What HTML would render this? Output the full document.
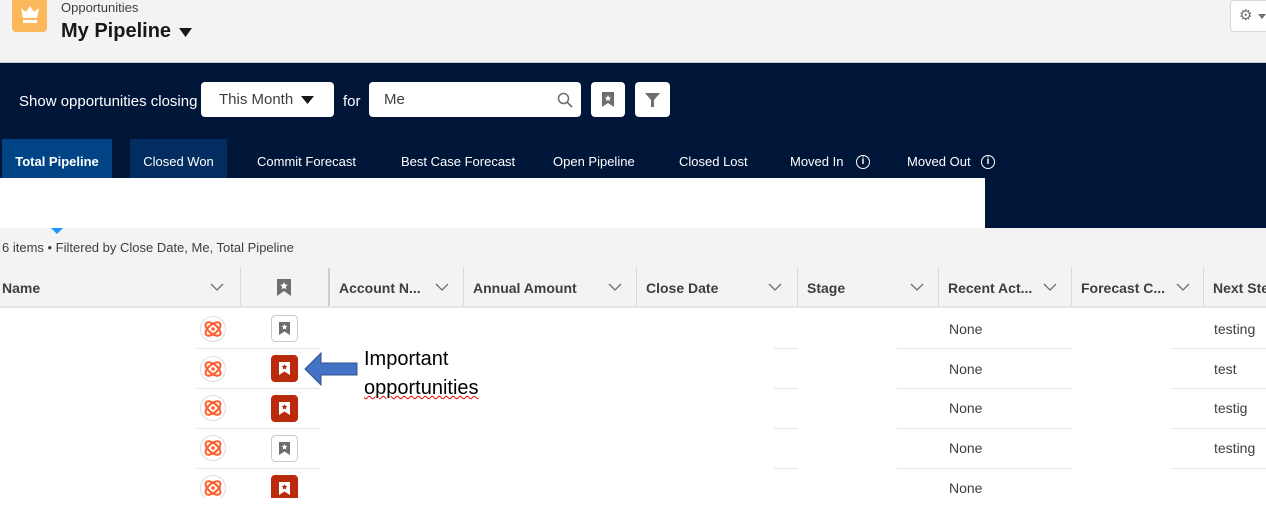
<!DOCTYPE html>
<html><head><meta charset="utf-8"><style>
*{margin:0;padding:0;box-sizing:border-box}
body{width:1266px;height:518px;overflow:hidden;position:relative;font-family:"Liberation Sans",sans-serif;background:#fff;color:#181818}
.a{position:absolute;white-space:nowrap}
.hdr{left:0;top:0;width:1266px;height:63px;background:#f3f3f3;border-bottom:1px solid #c9c9c9}
.navy{left:0;top:63px;width:1266px;height:165px;background:#001639}
.tab{top:139px;height:39px;color:#fff;font-size:13px;line-height:46px;text-align:center}
.gray{left:0;top:228px;width:1266px;height:40px;background:#f3f3f3}
.th{top:268px;height:40px;background:#f3f3f3;border-bottom:2px solid #e5e5e5;width:1266px;left:0;overflow:hidden}
.col{position:absolute;top:0;height:38px;border-left:1px solid #d8d8d8;font-weight:bold;font-size:14px;line-height:40px;padding-left:9px;color:#3e3e3c;white-space:nowrap;overflow:hidden}
.chev{position:absolute;top:15px}
.hl{height:1px;background:#e5e5e5}
.cell{font-size:14px;color:#3e3e3c}
.info{position:absolute;width:14px;height:14px;border:1.5px solid #fff;border-radius:50%;font-size:10px;line-height:11px;font-weight:bold;text-align:center;top:155px;color:#fff}
</style></head><body>
<div class="a hdr"></div>
<div class="a" style="left:12px;top:0;width:35px;height:32px;background:#fcb95b;border-radius:0 0 4px 4px"></div>
<svg class="a" style="left:18px;top:2px" width="24" height="24" viewBox="0 0 24 24"><path d="M3 6l5 4 4-6 4 6 5-4-2 10H5z" fill="#fff"/><rect x="5" y="18" width="14" height="3" fill="#fff"/></svg>
<div class="a" style="left:61px;top:0;font-size:13px;color:#3e3e3c">Opportunities</div>
<div class="a" style="left:61px;top:20px;font-size:20px;font-weight:bold">My Pipeline</div>
<svg class="a" style="left:179px;top:28px" width="13" height="9"><path d="M0 0h13L6.5 9z" fill="#181818"/></svg>
<div class="a" style="left:1230px;top:0;width:40px;height:32px;background:#fff;border:1px solid #d8d8d8;border-radius:4px"></div>
<div class="a" style="left:1239px;top:6px;font-size:15px;color:#706e6b">⚙</div>
<svg class="a" style="left:1258px;top:14px" width="8" height="5"><path d="M0 0h8L4 5z" fill="#706e6b"/></svg>
<div class="a navy"></div>
<div class="a" style="left:19px;top:93px;color:#fff;font-size:15px">Show opportunities closing</div>
<div class="a" style="left:201px;top:82px;width:133px;height:35px;background:#fff;border-radius:4px;font-size:15px;color:#3e3e3c;line-height:35px;padding-left:18px">This Month</div>
<svg class="a" style="left:301px;top:96px" width="13" height="8"><path d="M0 0h13L6.5 8z" fill="#181818"/></svg>
<div class="a" style="left:343px;top:93px;color:#fff;font-size:15px">for</div>
<div class="a" style="left:369px;top:82px;width:212px;height:35px;background:#fff;border-radius:4px;font-size:15px;color:#3e3e3c;line-height:35px;padding-left:15px">Me</div>
<svg class="a" style="left:557px;top:92px" width="16" height="16" viewBox="0 0 16 16"><circle cx="6.5" cy="6.5" r="5" fill="none" stroke="#706e6b" stroke-width="1.5"/><path d="M10 10l5 5" stroke="#706e6b" stroke-width="1.6"/></svg>
<div class="a" style="left:591px;top:82px;width:34px;height:35px;background:#fff;border-radius:4px"></div>
<svg class="a" style="left:602px;top:92px" width="12" height="15"><path d="M0 0h12v15l-6-4-6 4z" fill="#706e6b"/><path d="M6 3l1 2.2 2.2.2-1.7 1.5.5 2.2L6 8 4 9.1l.5-2.2L2.8 5.4 5 5.2z" fill="#fff"/></svg>
<div class="a" style="left:635px;top:82px;width:35px;height:35px;background:#fff;border-radius:4px"></div>
<svg class="a" style="left:645px;top:93px" width="15" height="14"><path d="M0 0h15L9 7v7H6V7z" fill="#706e6b"/></svg>
<div class="a tab" style="left:2px;width:110px;background:#014486;font-weight:bold">Total Pipeline</div>
<div class="a tab" style="left:130px;width:97px;background:#032d60">Closed Won</div>
<div class="a tab" style="left:257px">Commit Forecast</div>
<div class="a tab" style="left:401px">Best Case Forecast</div>
<div class="a tab" style="left:553px">Open Pipeline</div>
<div class="a tab" style="left:679px">Closed Lost</div>
<div class="a tab" style="left:790px">Moved In</div><div class="info" style="left:856px">i</div>
<div class="a tab" style="left:907px">Moved Out</div><div class="info" style="left:981px">i</div>
<div class="a" style="left:0;top:178px;width:985px;height:50px;background:#fff"></div>
<div class="a gray"></div>
<svg class="a" style="left:51px;top:228px" width="12" height="6"><path d="M0 0h12L6 6z" fill="#1b96ff"/></svg>
<div class="a" style="left:2px;top:240px;font-size:13px;color:#3e3e3c">6 items • Filtered by Close Date, Me, Total Pipeline</div>
<svg width="0" height="0" style="position:absolute"><defs>
<path id="cv" d="M1 1l6 6 6-6" fill="none" stroke="#706e6b" stroke-width="1.3"/>
</defs></svg>
<div class="a th">
<div class="col" style="left:-9px;width:250px;border:none;padding-left:11px">Name</div><svg class="chev" style="left:210px" width="14" height="9"><use href="#cv"/></svg>
<div class="col" style="left:240px;width:88px"></div>
<div class="col" style="left:328px;width:135px;border-left:2px solid #ccc">Account N...</div><svg class="chev" style="left:435px" width="14" height="9"><use href="#cv"/></svg>
<div class="col" style="left:463px;width:173px">Annual Amount</div><svg class="chev" style="left:608px" width="14" height="9"><use href="#cv"/></svg>
<div class="col" style="left:636px;width:161px">Close Date</div><svg class="chev" style="left:768px" width="14" height="9"><use href="#cv"/></svg>
<div class="col" style="left:797px;width:141px">Stage</div><svg class="chev" style="left:910px" width="14" height="9"><use href="#cv"/></svg>
<div class="col" style="left:938px;width:133px">Recent Act...</div><svg class="chev" style="left:1043px" width="14" height="9"><use href="#cv"/></svg>
<div class="col" style="left:1071px;width:132px">Forecast C...</div><svg class="chev" style="left:1176px" width="14" height="9"><use href="#cv"/></svg>
<div class="col" style="left:1203px;width:70px">Next Step</div>
</div>
<svg class="a" style="left:277px;top:279px" width="14" height="17"><path d="M0 0h14v17l-7-5-7 5z" fill="#706e6b"/><path d="M7 3l1.2 2.5 2.6.3-2 1.8.6 2.6L7 9 4.6 10.2l.6-2.6-2-1.8 2.6-.3z" fill="#fff"/></svg>

<div class="a hl" style="left:197px;top:348px;width:123px"></div>
<div class="a hl" style="left:197px;top:388px;width:123px"></div>
<div class="a hl" style="left:197px;top:428px;width:123px"></div>
<div class="a hl" style="left:197px;top:468px;width:123px"></div>
<div class="a hl" style="left:774px;top:348px;width:24px"></div><div class="a hl" style="left:897px;top:348px;width:175px"></div><div class="a hl" style="left:1171px;top:348px;width:95px"></div>
<div class="a hl" style="left:774px;top:388px;width:24px"></div><div class="a hl" style="left:897px;top:388px;width:175px"></div><div class="a hl" style="left:1171px;top:388px;width:95px"></div>
<div class="a hl" style="left:774px;top:428px;width:24px"></div><div class="a hl" style="left:897px;top:428px;width:175px"></div><div class="a hl" style="left:1171px;top:428px;width:95px"></div>
<div class="a hl" style="left:774px;top:468px;width:24px"></div><div class="a hl" style="left:897px;top:468px;width:175px"></div><div class="a hl" style="left:1171px;top:468px;width:95px"></div>

<div class="a cell" style="left:949px;top:321px">None</div><div class="a cell" style="left:1214px;top:321px">testing</div>
<div class="a cell" style="left:949px;top:361px">None</div><div class="a cell" style="left:1214px;top:361px">test</div>
<div class="a cell" style="left:949px;top:400px">None</div><div class="a cell" style="left:1214px;top:400px">testig</div>
<div class="a cell" style="left:949px;top:440px">None</div><div class="a cell" style="left:1214px;top:440px">testing</div>
<div class="a cell" style="left:949px;top:480px">None</div>

<svg width="0" height="0" style="position:absolute"><defs>
<g id="at"><circle cx="13" cy="13" r="12.5" fill="#fff" stroke="#ddd"/><g fill="none" stroke="#ff5d2d" stroke-width="2"><ellipse cx="13" cy="13" rx="9" ry="4.5" transform="rotate(40 13 13)"/><ellipse cx="13" cy="13" rx="9" ry="4.5" transform="rotate(-40 13 13)"/></g><circle cx="13" cy="13" r="1.8" fill="#ff5d2d"/></g>
<g id="bg"><rect x=".5" y=".5" width="26" height="26" rx="4" fill="#fff" stroke="#c9c9c9"/><path d="M8 7h11v13l-5.5-3.5L8 20z" fill="#706e6b"/><path d="M13.5 9l.9 1.9 2 .2-1.5 1.4.4 2-1.8-1-1.8 1 .4-2-1.5-1.4 2-.2z" fill="#fff"/></g>
<g id="br"><rect width="27" height="27" rx="4" fill="#ba2a0c"/><path d="M8 7h11v13l-5.5-3.5L8 20z" fill="#fff"/><path d="M13.5 9l.9 1.9 2 .2-1.5 1.4.4 2-1.8-1-1.8 1 .4-2-1.5-1.4 2-.2z" fill="#ba2a0c"/></g>
</defs></svg>
<svg class="a" style="left:200px;top:316px" width="27" height="27"><use href="#at"/></svg>
<svg class="a" style="left:200px;top:356px" width="27" height="27"><use href="#at"/></svg>
<svg class="a" style="left:200px;top:395px" width="27" height="27"><use href="#at"/></svg>
<svg class="a" style="left:200px;top:435px" width="27" height="27"><use href="#at"/></svg>
<svg class="a" style="left:200px;top:475px" width="27" height="27"><use href="#at"/></svg>
<svg class="a" style="left:271px;top:315px" width="27" height="27"><use href="#bg"/></svg>
<svg class="a" style="left:271px;top:355px" width="27" height="27"><use href="#br"/></svg>
<svg class="a" style="left:271px;top:395px" width="27" height="27"><use href="#br"/></svg>
<svg class="a" style="left:271px;top:435px" width="27" height="27"><use href="#bg"/></svg>
<svg class="a" style="left:271px;top:475px" width="27" height="23"><use href="#br"/></svg>
<div class="a" style="left:0;top:498px;width:1266px;height:20px;background:#fff"></div>

<svg class="a" style="left:304px;top:352px" width="54" height="34"><path d="M1 17L17 1v10h36v12H17v10z" fill="#4472c4" stroke="#2f528f"/></svg>
<div class="a" style="left:364px;top:345px;font-size:20px;line-height:29px;color:#000">Important<br><span style="text-decoration:underline wavy #e00;text-decoration-thickness:1px">opportunities</span></div>
</body></html>
